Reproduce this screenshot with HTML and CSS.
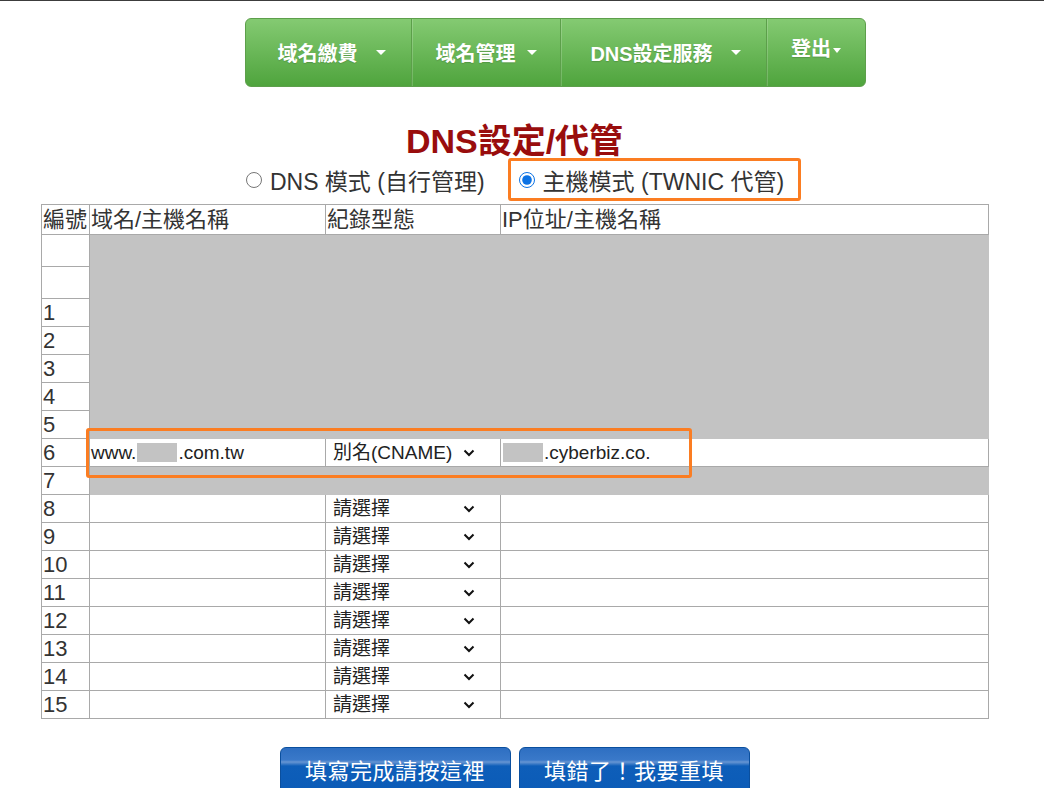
FILE: index.html
```html
<!DOCTYPE html>
<html lang="zh-TW">
<head>
  <meta charset="UTF-8" />
  <meta name="viewport" content="width=device-width, initial-scale=1.0"/>
  <title>DNS設定/代管</title>
  <link rel="stylesheet" href="styles.css">
</head>
<body>

<nav class="nav">
  <div class="nav-item item-fee">域名繳費 <span class="caret"></span></div>
  <div class="nav-item item-manage">域名管理 <span class="caret"></span></div>
  <div class="nav-item item-dns">DNS設定服務 <span class="caret"></span></div>
  <div class="nav-item item-logout">登出<span class="caret"></span></div>
</nav>

<div class="main">
  <h1 class="title">DNS設定/代管</h1>

  <div class="mode-row">
    <label class="mode"><input type="radio" name="mode"> DNS 模式 (自行管理)</label>
    <label class="mode mode-hl"><input type="radio" name="mode" checked> 主機模式 (TWNIC 代管)</label>
  </div>

  <div class="table-wrap">
    <table class="dns-table">
      <colgroup>
        <col class="c-no"><col class="c-host"><col class="c-type"><col class="c-ip">
      </colgroup>
      <tr class="row-head">
        <td>編號</td><td>域名/主機名稱</td><td>紀錄型態</td><td>IP位址/主機名稱</td>
      </tr>
      <tr class="row-tall"><td></td><td class="mask" colspan="3"></td></tr>
      <tr class="row-tall"><td></td><td class="mask" colspan="3"></td></tr>
      <tr><td>1</td><td class="mask" colspan="3"></td></tr>
      <tr><td>2</td><td class="mask" colspan="3"></td></tr>
      <tr><td>3</td><td class="mask" colspan="3"></td></tr>
      <tr><td>4</td><td class="mask" colspan="3"></td></tr>
      <tr><td>5</td><td class="mask" colspan="3"></td></tr>
      <tr class="row-filled">
        <td>6</td>
        <td class="val">www.<span class="redact"></span>.com.tw</td>
        <td><div class="sel">別名(CNAME)<svg class="chev" width="12" height="8" viewBox="0 0 12 8"><path d="M1.5 1.5 6 6l4.5-4.5" fill="none" stroke="#111" stroke-width="2"/></svg></div></td>
        <td class="val"><span class="redact"></span>.cyberbiz.co.</td>
      </tr>
      <tr><td>7</td><td class="mask" colspan="3"></td></tr>
      <tr><td>8</td><td></td><td><div class="sel">請選擇<svg class="chev" width="12" height="8" viewBox="0 0 12 8"><path d="M1.5 1.5 6 6l4.5-4.5" fill="none" stroke="#111" stroke-width="2"/></svg></div></td><td></td></tr>
      <tr><td>9</td><td></td><td><div class="sel">請選擇<svg class="chev" width="12" height="8" viewBox="0 0 12 8"><path d="M1.5 1.5 6 6l4.5-4.5" fill="none" stroke="#111" stroke-width="2"/></svg></div></td><td></td></tr>
      <tr><td>10</td><td></td><td><div class="sel">請選擇<svg class="chev" width="12" height="8" viewBox="0 0 12 8"><path d="M1.5 1.5 6 6l4.5-4.5" fill="none" stroke="#111" stroke-width="2"/></svg></div></td><td></td></tr>
      <tr><td>11</td><td></td><td><div class="sel">請選擇<svg class="chev" width="12" height="8" viewBox="0 0 12 8"><path d="M1.5 1.5 6 6l4.5-4.5" fill="none" stroke="#111" stroke-width="2"/></svg></div></td><td></td></tr>
      <tr><td>12</td><td></td><td><div class="sel">請選擇<svg class="chev" width="12" height="8" viewBox="0 0 12 8"><path d="M1.5 1.5 6 6l4.5-4.5" fill="none" stroke="#111" stroke-width="2"/></svg></div></td><td></td></tr>
      <tr><td>13</td><td></td><td><div class="sel">請選擇<svg class="chev" width="12" height="8" viewBox="0 0 12 8"><path d="M1.5 1.5 6 6l4.5-4.5" fill="none" stroke="#111" stroke-width="2"/></svg></div></td><td></td></tr>
      <tr><td>14</td><td></td><td><div class="sel">請選擇<svg class="chev" width="12" height="8" viewBox="0 0 12 8"><path d="M1.5 1.5 6 6l4.5-4.5" fill="none" stroke="#111" stroke-width="2"/></svg></div></td><td></td></tr>
      <tr><td>15</td><td></td><td><div class="sel">請選擇<svg class="chev" width="12" height="8" viewBox="0 0 12 8"><path d="M1.5 1.5 6 6l4.5-4.5" fill="none" stroke="#111" stroke-width="2"/></svg></div></td><td></td></tr>
    </table>
    <!-- 標示框 -->
    <div class="highlight"></div>
  </div>

  <div class="actions">
    <button class="btn">填寫完成請按這裡</button>
    <button class="btn">填錯了！我要重填</button>
  </div>
</div>

</body>
</html>
```

FILE: styles.css
```css
* {
  box-sizing: border-box;
}

body {
  margin: 0;
  border-top: 1px solid #3c3c3c;
  font-family: "Liberation Sans", "Noto Sans CJK TC", sans-serif;
  color: #333;
  background: #fff;
  overflow: hidden;
}

/* --- menu --- */
.nav {
  display: flex;
  width: 621px;
  height: 69px;
  margin: 17px 0 0 245px;
  border: 1px solid #5d9f4b;
  border-radius: 6px;
  background: linear-gradient(#84ca72, #4fa43d);
  overflow: hidden;
}

.nav-item {
  display: flex;
  align-items: center;
  justify-content: center;
  color: #fff;
  font-size: 20px;
  font-weight: bold;
  text-shadow: 0 1px 1px rgba(0,0,0,0.15);
  border-right: 1px solid #5c9f4a;
  box-shadow: inset 1px 0 0 rgba(255,255,255,0.18);
}
.item-fee { width: 166px; box-shadow: none; padding-left: 6px; }
.item-manage { width: 149px; }
.item-dns { width: 206px; padding-left: 4px; }
.item-logout { flex: 1; border-right: none; padding-bottom: 10px; }

.caret {
  display: inline-block;
  width: 0;
  height: 0;
  margin-left: 18px;
  border-left: 5px solid transparent;
  border-right: 5px solid transparent;
  border-top: 5px solid #fff;
}
.item-manage .caret { margin-left: 11px; }
.item-logout .caret { margin: 6px 0 0 2px; border-left-width: 4px; border-right-width: 4px; }

/* --- content --- */
.main {
  width: 947px;
  margin-left: 41px;
}

.title {
  margin: 34px 0 0;
  text-align: center;
  font-size: 34px;
  line-height: 40px;
  font-weight: bold;
  color: #990d0d;
}

.mode-row {
  display: flex;
  justify-content: center;
  align-items: center;
  gap: 23px;
  height: 43px;
  margin: -3px 0 3px;
  padding-left: 18px;
  font-size: 23px;
  color: #333;
}

.mode {
  display: inline-flex;
  align-items: center;
  gap: 8px;
}
.mode input {
  width: 16px;
  height: 16px;
  margin: 0;
  accent-color: #0b72e5;
}
.mode-hl {
  height: 43px;
  padding: 0 14px 0 8px;
  border: 3px solid #fb7d22;
  border-radius: 3px;
}

/* --- table --- */
.table-wrap {
  position: relative;
}

.dns-table {
  width: 947px;
  table-layout: fixed;
  border-collapse: collapse;
  border: 1px solid #a9a9a9;
  font-size: 22px;
  color: #333;
}
.c-no { width: 48px; }
.c-host { width: 236px; }
.c-type { width: 175px; }
.c-ip { width: 488px; }

.dns-table td {
  height: 28px;
  padding: 0 0 0 1px;
  border: 1px solid #a9a9a9;
  line-height: 25px;
  white-space: nowrap;
  overflow: hidden;
}
.dns-table .row-head td { height: 30px; }
.dns-table .row-tall td { height: 32px; }

.dns-table td.mask {
  background: #c3c3c3;
  border-color: #c3c3c3;
}

.dns-table td.val {
  font-size: 19px;
  color: #222;
}

.redact {
  display: inline-block;
  width: 40px;
  height: 19px;
  margin: 0 1px;
  vertical-align: -3px;
  background: #c3c3c3;
}

.sel {
  display: flex;
  align-items: center;
  justify-content: space-between;
  width: 148px;
  padding-left: 6px;
  font-size: 19px;
  color: #222;
}
.chev {
  display: block;
}

.highlight {
  position: absolute;
  left: 45px;
  top: 224px;
  width: 606px;
  height: 50px;
  border: 3px solid #fb7d22;
  border-radius: 3px;
}

/* --- buttons --- */
.actions {
  display: flex;
  justify-content: center;
  gap: 8px;
  margin-top: 28px;
}

.btn {
  width: 231px;
  height: 50px;
  padding: 0 0 6px;
  border: 1px solid #0a4f9e;
  border-radius: 6px 6px 0 0;
  background: linear-gradient(#2e6fc2 0, #3a79c9 12px, #6695d3 14px, #0e5eb9 18px, #0b5bb7 100%);
  color: #fff;
  font-family: "Liberation Sans", "Noto Sans CJK TC", sans-serif;
  font-size: 22px;
  letter-spacing: 0.5px;
}
```
